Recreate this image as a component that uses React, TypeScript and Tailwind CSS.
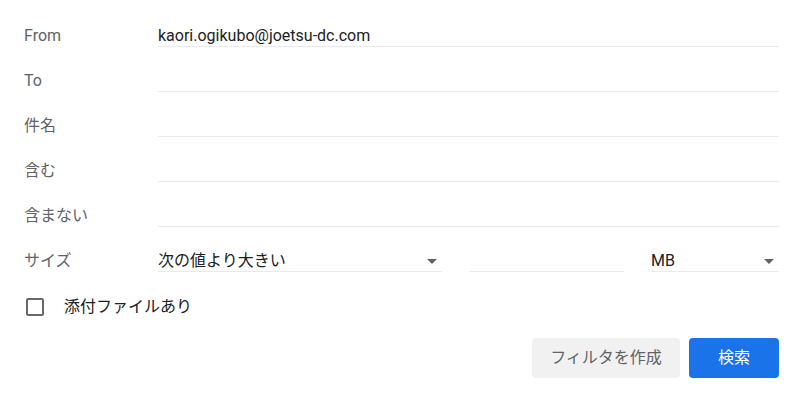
import React from "react";

const FONT = { fontFamily: 'Roboto, "Noto Sans CJK JP", sans-serif' };

const TextRow = ({ label, value }: { label: string; value?: string }) => (
  <div className="flex h-[45px] items-end">
    <div className="w-[134px] h-[20px] leading-[20px] text-[16px] text-[#5f6368] mb-[1px]">
      {label}
    </div>
    <div className="flex-1 h-[21px] border-b border-[#e8eaed] text-[16px] leading-[20px] text-[#202124]">
      {value}
    </div>
  </div>
);

const Caret = () => (
  <svg width="10" height="5" viewBox="0 0 10 5" className="shrink-0">
    <path d="M0 0h10L5 5z" fill="#5f6368" />
  </svg>
);

export default function App() {
  return (
    <div className="w-[802px] h-[399px] bg-white pl-6 pr-[23px] pt-[2px]" style={FONT}>
      <TextRow label="From" value="kaori.ogikubo@joetsu-dc.com" />
      <TextRow label="To" />
      <TextRow label="件名" />
      <TextRow label="含む" />
      <TextRow label="含まない" />

      {/* Size row */}
      <div className="flex h-[45px] items-end">
        <div className="w-[134px] h-[20px] leading-[20px] text-[16px] text-[#5f6368] mb-[1px]">
          サイズ
        </div>
        <div className="w-[284px] h-[21px] border-b border-[#e8eaed] flex items-center justify-between pr-[5px] text-[16px] leading-[20px] text-[#202124]">
          <span>次の値より大きい</span>
          <Caret />
        </div>
        <div className="w-[155px] ml-[27px] h-[21px] border-b border-[#e8eaed]" />
        <div className="flex-1 ml-[27px] h-[21px] border-b border-[#e8eaed] flex items-center justify-between pr-[5px] text-[16px] leading-[20px] text-[#202124]">
          <span>MB</span>
          <Caret />
        </div>
      </div>

      {/* Attachment */}
      <label className="flex items-center mt-[26px] h-[18px]">
        <span className="ml-[2px] w-[18px] h-[18px] rounded-[2px] border-2 border-[#696969]" />
        <span className="ml-[20px] text-[16px] leading-[20px] text-[#202124]">添付ファイルあり</span>
      </label>

      {/* Buttons */}
      <div className="flex justify-end gap-[9px] mt-[22px]">
        <button className="w-[148px] h-[40px] rounded-[4px] bg-[#f1f1f1] text-[16px] text-[#5f6368]">
          フィルタを作成
        </button>
        <button className="w-[90px] h-[40px] rounded-[4px] bg-[#1a73e8] text-[16px] text-white">
          検索
        </button>
      </div>
    </div>
  );
}
